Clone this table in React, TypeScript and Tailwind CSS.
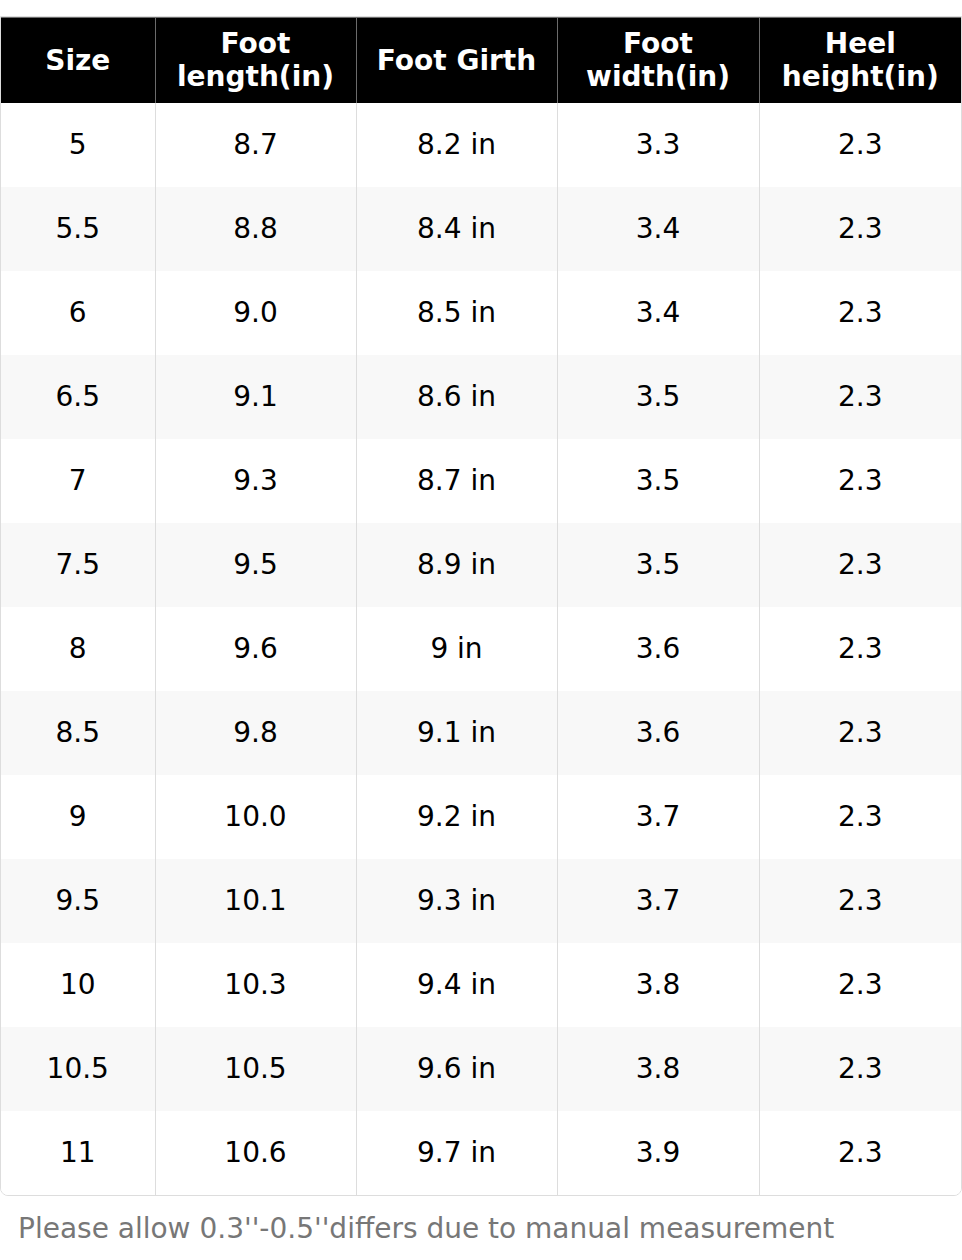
const headers = ['Size', 'Foot length(in)', 'Foot Girth', 'Foot width(in)', 'Heel height(in)'];

const rows = [
    ['5', '8.7', '8.2 in', '3.3', '2.3'],
    ['5.5', '8.8', '8.4 in', '3.4', '2.3'],
    ['6', '9.0', '8.5 in', '3.4', '2.3'],
    ['6.5', '9.1', '8.6 in', '3.5', '2.3'],
    ['7', '9.3', '8.7 in', '3.5', '2.3'],
    ['7.5', '9.5', '8.9 in', '3.5', '2.3'],
    ['8', '9.6', '9 in', '3.6', '2.3'],
    ['8.5', '9.8', '9.1 in', '3.6', '2.3'],
    ['9', '10.0', '9.2 in', '3.7', '2.3'],
    ['9.5', '10.1', '9.3 in', '3.7', '2.3'],
    ['10', '10.3', '9.4 in', '3.8', '2.3'],
    ['10.5', '10.5', '9.6 in', '3.8', '2.3'],
    ['11', '10.6', '9.7 in', '3.9', '2.3'],
];

const widths = ['w-[154px]', 'w-[201px]', 'w-[201px]', 'w-[202px]', 'w-[202px]'];

const SizeChart = () => {
    return (
        <div className="bg-white w-[962px] pt-4 font-['DejaVu_Sans',sans-serif]">
            <div className="border border-[#dddddd] rounded-b-lg overflow-hidden">
                <table className="w-full border-collapse table-fixed">
                    <thead>
                        <tr className="bg-black text-white h-[85px]">
                            {headers.map((h, i) => (
                                <th
                                    key={h}
                                    className={`${widths[i]} text-[28px] leading-[33px] font-bold text-center px-1 border-t border-[#6b6b6b] ${i > 0 ? 'border-l' : ''}`}
                                >
                                    {h.includes('(') ? (
                                        <>
                                            {h.split(' ')[0]}
                                            <br />
                                            {h.split(' ')[1]}
                                        </>
                                    ) : h}
                                </th>
                            ))}
                        </tr>
                    </thead>
                    <tbody>
                        {rows.map((r, ri) => (
                            <tr key={ri} className={`h-[84px] ${ri % 2 === 1 ? 'bg-[#f8f8f8]' : 'bg-white'}`}>
                                {r.map((c, ci) => (
                                    <td
                                        key={ci}
                                        className={`text-[28px] text-black text-center ${ci > 0 ? 'border-l border-[#dddddd]' : ''}`}
                                    >
                                        {c}
                                    </td>
                                ))}
                            </tr>
                        ))}
                    </tbody>
                </table>
            </div>
            <p className="text-[28px] leading-[42px] text-[#777777] px-[18px] pt-[12px]">
                Please allow 0.3''-0.5''differs due to manual measurement
            </p>
        </div>
    )
};

export default function App() {
    return <SizeChart />
}
